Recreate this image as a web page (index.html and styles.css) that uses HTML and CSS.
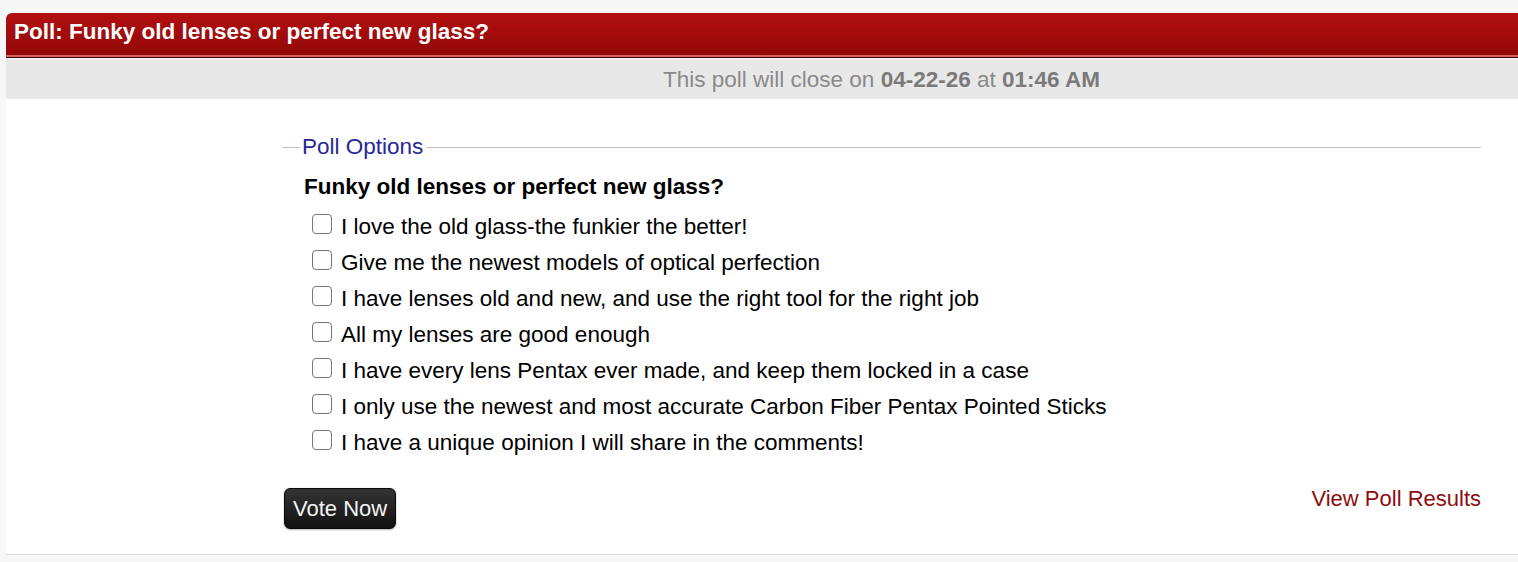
FILE: index.html
```html
<!DOCTYPE html>
<html lang="en">
<head>
<meta charset="utf-8">
<title>Poll</title>
<link rel="stylesheet" href="styles.css">
</head>
<body>
<div class="poll">
  <div class="poll-head">Poll: Funky old lenses or perfect new glass?</div>
  <div class="poll-notice"><span class="notice-inner">This poll will close on <b>04-22-26</b> at <b>01:46 AM</b></span></div>
  <div class="poll-body">
    <form class="poll-form">
      <fieldset class="poll-fieldset">
        <legend class="poll-legend">Poll Options</legend>
        <div class="poll-question">Funky old lenses or perfect new glass?</div>
        <ul class="poll-options">
          <li class="poll-option"><input type="checkbox" class="poll-check" id="o1"><label for="o1">I love the old glass-the funkier the better!</label></li>
          <li class="poll-option"><input type="checkbox" class="poll-check" id="o2"><label for="o2">Give me the newest models of optical perfection</label></li>
          <li class="poll-option"><input type="checkbox" class="poll-check" id="o3"><label for="o3">I have lenses old and new, and use the right tool for the right job</label></li>
          <li class="poll-option"><input type="checkbox" class="poll-check" id="o4"><label for="o4">All my lenses are good enough</label></li>
          <li class="poll-option"><input type="checkbox" class="poll-check" id="o5"><label for="o5">I have every lens Pentax ever made, and keep them locked in a case</label></li>
          <li class="poll-option"><input type="checkbox" class="poll-check" id="o6"><label for="o6">I only use the newest and most accurate Carbon Fiber Pentax Pointed Sticks</label></li>
          <li class="poll-option"><input type="checkbox" class="poll-check" id="o7"><label for="o7">I have a unique opinion I will share in the comments!</label></li>
        </ul>
      </fieldset>
      <div class="poll-actions">
        <button type="button" class="vote-btn">Vote Now</button>
        <a href="#" class="results-link">View Poll Results</a>
      </div>
    </form>
  </div>
</div>
</body>
</html>
```

FILE: styles.css
```css
html, body {
  margin: 0;
  padding: 0;
  background: #f7f7f7;
  font-family: "Liberation Sans", Arial, sans-serif;
  overflow: hidden;
}

.poll {
  padding: 13px 0 0 6px;
}

.poll-head {
  height: 44px;
  box-sizing: border-box;
  padding: 6px 8px 0;
  line-height: 26px;
  font-size: 22.5px;
  font-weight: bold;
  color: #fff;
  background: linear-gradient(#b20f10, #930808);
  border-radius: 6px 0 0 0;
  border-bottom: 2px solid #d8605f;
  box-shadow: 0 1px 0 #3a0606;
}

.poll-notice {
  margin-top: 2px;
  height: 40px;
  line-height: 42px;
  background: #e8e8e8;
  padding: 0 37px 0 276px;
  text-align: center;
  font-size: 22.5px;
  color: #8a8a8a;
}

.poll-notice b {
  color: #7a7a7a;
}

.poll-body {
  background: #fff;
  border-bottom: 1px solid #dcdcdc;
  padding: 35px 37px 25px 276px;
}

.poll-form {
  margin: 0;
}

.poll-fieldset {
  margin: 0;
  padding: 0 0 0 18px;
  border: 0;
  border-top: 1px solid #c4c4c4;
  min-width: 0;
}

.poll-legend {
  padding: 0 3px 0 2px;
  font-size: 22.5px;
  line-height: 26px;
  color: #272796;
}

.poll-question {
  margin: 14px 0 0 4px;
  font-size: 22.5px;
  line-height: 26px;
  font-weight: bold;
  color: #000;
}

.poll-options {
  list-style: none;
  margin: 9px 0 0 12px;
  padding: 0;
}

.poll-option {
  display: flex;
  align-items: flex-start;
  gap: 9px;
  height: 36px;
  line-height: 36px;
  font-size: 22.5px;
  color: #000;
}

.poll-check {
  appearance: none;
  -webkit-appearance: none;
  width: 20px;
  height: 20px;
  margin: 5px 0 0 0;
  border: 1.5px solid #767676;
  border-radius: 4px;
  background: #fff;
  box-sizing: border-box;
  flex: none;
}

.poll-actions {
  display: flex;
  justify-content: space-between;
  align-items: flex-start;
  margin-top: 27px;
  padding-left: 2px;
}

.vote-btn {
  height: 41px;
  padding: 0 8px;
  font-family: "Liberation Sans", Arial, sans-serif;
  font-size: 22px;
  color: #f4f4f4;
  background: linear-gradient(#333333, #121212);
  border: 1px solid #0a0a0a;
  border-radius: 6px;
  box-shadow: 0 1px 2px rgba(0,0,0,0.3);
}

.results-link {
  font-size: 22px;
  line-height: 22px;
  color: #8c0d0d;
  text-decoration: none;
}
```
